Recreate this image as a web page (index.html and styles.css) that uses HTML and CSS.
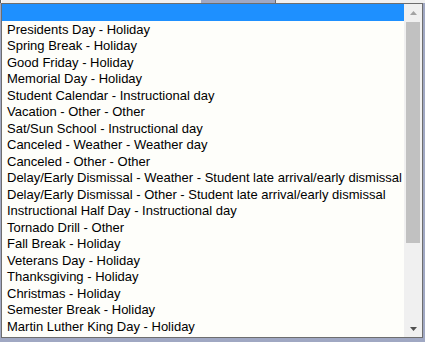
FILE: index.html
```html
<!DOCTYPE html>
<html>
<head>
<meta charset="utf-8">
<link rel="stylesheet" href="styles.css">
</head>
<body>
<div class="page">
  <div class="topstrip">
    <div class="tab-left"></div>
    <div class="tab-gap"></div>
    <div class="tab-right"></div>
  </div>
  <div class="listbox">
    <ul class="options">
      <li class="opt selected">&nbsp;</li>
      <li class="opt">Presidents Day - Holiday</li>
      <li class="opt">Spring Break - Holiday</li>
      <li class="opt">Good Friday - Holiday</li>
      <li class="opt">Memorial Day - Holiday</li>
      <li class="opt">Student Calendar - Instructional day</li>
      <li class="opt">Vacation - Other - Other</li>
      <li class="opt">Sat/Sun School - Instructional day</li>
      <li class="opt">Canceled - Weather - Weather day</li>
      <li class="opt">Canceled - Other - Other</li>
      <li class="opt">Delay/Early Dismissal - Weather - Student late arrival/early dismissal</li>
      <li class="opt">Delay/Early Dismissal - Other - Student late arrival/early dismissal</li>
      <li class="opt">Instructional Half Day - Instructional day</li>
      <li class="opt">Tornado Drill - Other</li>
      <li class="opt">Fall Break - Holiday</li>
      <li class="opt">Veterans Day - Holiday</li>
      <li class="opt">Thanksgiving - Holiday</li>
      <li class="opt">Christmas - Holiday</li>
      <li class="opt">Semester Break - Holiday</li>
      <li class="opt">Martin Luther King Day - Holiday</li>
    </ul>
    <div class="scrollbar">
      <div class="sb-btn">
        <svg width="7" height="4" viewBox="0 0 7 4"><path d="M3.5 0 L7 4 L0 4 Z" fill="#a3a3a3"/></svg>
      </div>
      <div class="sb-track">
        <div class="sb-thumb"></div>
      </div>
      <div class="sb-btn">
        <svg width="7" height="4" viewBox="0 0 7 4"><path d="M0 0 L7 0 L3.5 4 Z" fill="#505050"/></svg>
      </div>
    </div>
  </div>
</div>
</body>
</html>
```

FILE: styles.css
```css
html, body {
  margin: 0;
  padding: 0;
}
body {
  background: #a0a8c3;
  width: 425px;
  height: 342px;
  overflow: hidden;
}
.page {
  display: flex;
  flex-direction: column;
}
.topstrip {
  display: flex;
  height: 3px;
}
.tab-left {
  width: 200px;
  background: #f0f0f0;
  border-left: 1px solid #5a5a5a;
  box-shadow: inset 1px 0 0 #ffffff;
}
.tab-gap {
  width: 74px;
  background: #a0a8c3;
}
.tab-right {
  flex: 1;
  background: #f0f0f0;
  border-left: 1px solid #6a6a6a;
}
.listbox {
  margin-left: 1px;
  width: 420px;
  height: 333px;
  border: 1px solid #6e6e6e;
  background: #fefefa;
  display: flex;
}
.options {
  list-style: none;
  margin: 0;
  padding: 0;
  flex: 1;
  overflow: hidden;
  font-family: "Liberation Sans", Arial, sans-serif;
  font-size: 13px;
  color: #000000;
}
.opt {
  height: 16.5px;
  line-height: 17.5px;
  padding-left: 5px;
  white-space: nowrap;
}
.opt.selected {
  background: #1e90ff;
}
.scrollbar {
  width: 18px;
  background: #f0f0f0;
  display: flex;
  flex-direction: column;
}
.sb-btn {
  height: 17px;
  display: flex;
  align-items: center;
  justify-content: center;
}
.sb-track {
  flex: 1;
  display: flex;
  flex-direction: column;
  padding: 1px 2px 0 2px;
}
.sb-thumb {
  height: 221px;
  background: #c1c1c1;
}
```
